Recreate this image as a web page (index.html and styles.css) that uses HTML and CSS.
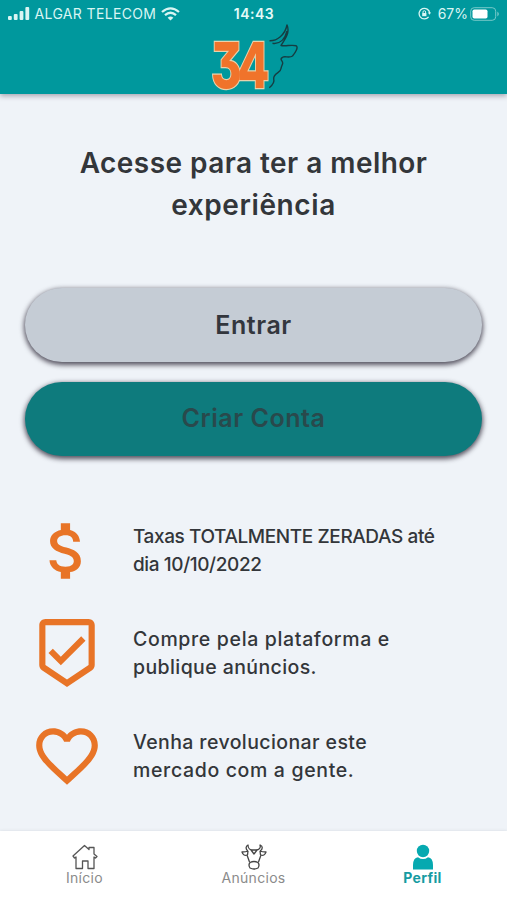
FILE: index.html
```
<!DOCTYPE html>
<html lang="pt-BR">
<head>
  <meta charset="UTF-8">
  <meta name="viewport" content="width=device-width, initial-scale=1.0">
  <title>Perfil</title>
  <link rel="stylesheet" href="styles.css">
</head>
<body>
  <header class="header">
    <div class="status">
      <div class="carrier">
        <svg width="22" height="14" viewBox="0 0 22 14" fill="#d9f5f3"><rect x="0" y="9" width="3.8" height="4" rx="1"/><rect x="5.8" y="7" width="3.8" height="6" rx="1"/><rect x="11.6" y="4" width="3.8" height="9" rx="1"/><rect x="17.4" y="0" width="3.8" height="13" rx="1"/></svg>
        <span class="carrier-name">ALGAR TELECOM</span>
        <svg width="19" height="14" viewBox="0 0 19 14" fill="none" stroke="#d9f5f3" stroke-width="2.3"><path d="M1 5Q9.5-2.3 18 5M4 8.2Q9.500 3.400 15 8.200"/><path d="M6.600 10.700Q9.500 8.300 12.400 10.700L9.500 13.600Z" fill="#d9f5f3" stroke="none"/></svg>
      </div>
      <div class="clock">14:43</div>
      <div class="battery">
        <svg width="13" height="13" viewBox="0 0 13 13" fill="none" stroke="#d9f5f3"><path d="M10.600 9.900A5.300 5.300 0 1 1 11.700 6" stroke-width="1.300"/><path d="M9.800 5.500h3.200l-1.500 2.300z" fill="#d9f5f3" stroke="none"/><rect x="4.200" y="6" width="4.200" height="3.200" fill="#d9f5f3" stroke="none"/><path d="M5 6V5a1.300 1.300 0 0 1 2.600 0v1"/></svg>
        <span class="percent">67%</span>
        <svg width="30" height="14" viewBox="0 0 30 14"><rect x=".7" y=".7" width="25" height="12.600" rx="3.500" fill="none" stroke="#76c9c9"/><rect x="2.500" y="2.500" width="15" height="9" rx="1.800" fill="#fff"/><path d="M27.300 4.500q3.200 2.500 0 5z" fill="#76c9c9"/></svg>
      </div>
    </div>
    <svg class="logo" width="90" height="84" viewBox="0 0 90 84">
      <text class="logo-number" x="0" y="65.500" textLength="54" lengthAdjust="spacingAndGlyphs">34</text>
      <path d="M58.500 18.700C66 19 74 13 76 3C79 10 75 16 70 23.500C75 24.500 80 22.500 85 23.700C88 25 84 31 81.500 34C78 36.500 74 33.500 71.500 35.300C68 37.500 72 38.500 71.700 41.500C71 43.500 70.500 44 70 46.500C70 51 62 51 62.700 57C64 61 61 63.500 58.300 65.700M61.500 21.300C69 22.500 74 17 76 9" fill="none" stroke="#153d42" stroke-width="1.400" stroke-linejoin="round"/>
    </svg>
  </header>

  <main class="content">
    <h1 class="title"><span class="title-top">Acesse para ter a melhor</span><br>experiência</h1>

    <div class="buttons">
      <button class="button login">Entrar</button>
      <button class="button signup">Criar Conta</button>
    </div>

    <div class="benefits">
      <div class="benefit">
        <svg class="icon" viewBox="0 0 24 24"><path d="M11.800 10.900c-2.270-.590-3-1.200-3-2.150 0-1.090 1.010-1.850 2.700-1.850 1.780 0 2.440.850 2.500 2.100h2.210c-.070-1.720-1.120-3.300-3.210-3.810V3h-3v2.160c-1.940.420-3.500 1.680-3.500 3.610 0 2.310 1.910 3.460 4.700 4.130 2.500.600 3 1.480 3 2.410 0 .690-.490 1.790-2.700 1.790-2.060 0-2.870-.920-2.980-2.100h-2.200c.120 2.190 1.760 3.420 3.680 3.830V21h3v-2.150c1.950-.370 3.500-1.500 3.500-3.550 0-2.840-2.430-3.810-4.700-4.400z"/></svg>
        <p class="fees">Taxas TOTALMENTE ZERADAS até<br>dia 10/10/2022</p>
      </div>
      <div class="benefit">
        <svg class="icon" viewBox="0 0 24 24"><path d="M19 1H5c-1.100 0-1.990.900-1.990 2L3 15.930c0 .690.350 1.300.880 1.660L12 23l8.110-5.410c.530-.360.880-.970.880-1.660L21 3c0-1.100-.900-2-2-2zm0 14.930l-7 4.660-7-4.660V3h14v12.930z"/><path d="M10 13.200l6.600-6.600L18 8l-8 8-4-4 1.400-1.400z"/></svg>
        <p><span class="wide">Compre pela plataforma e</span><br>publique anúncios.</p>
      </div>
      <div class="benefit">
        <svg class="icon" viewBox="0 0 24 24"><path d="M16.500 3c-1.740 0-3.410.810-4.500 2.090C10.910 3.810 9.240 3 7.500 3 4.420 3 2 5.420 2 8.500c0 3.780 3.400 6.860 8.550 11.540L12 21.350l1.450-1.320C18.600 15.360 22 12.280 22 8.500 22 5.420 19.580 3 16.500 3zm-4.400 15.550l-.1.100-.1-.1C7.140 14.240 4 11.390 4 8.500 4 6.500 5.500 5 7.500 5c1.540 0 3.040.990 3.570 2.360h1.870C13.460 5.990 14.960 5 16.500 5c2 0 3.500 1.500 3.500 3.500 0 2.890-3.140 5.740-7.900 10.050z"/></svg>
        <p>Venha revolucionar este<br><span class="wide">mercado com a gente.</span></p>
      </div>
    </div>
  </main>

  <nav class="tabs">
    <a class="tab">
      <svg width="26" height="26" viewBox="0 0 26 26" fill="none" stroke="#555" stroke-width="1.300" stroke-linejoin="round"><path d="M1 12L12.500 1.500L17 5.500V3.500H22V10L25 12.500L23.500 14L22 13V24.500H16V17H10.500V24.500H4V13L2.500 14Z"/></svg>
      <span>Início</span>
    </a>
    <a class="tab">
      <svg width="26" height="26" viewBox="0 0 26 26" fill="none" stroke="#444" stroke-width="1.300" stroke-linejoin="round"><path d="M7 7C4 5 5 2 7 1C7 4 9 6 11 6H15C18 6 20 4 19 1C22 2 22 5 19 7M7 7C5 8 3 8 1 8C2 11 4 12 6 11L8.500 18M19 7C21 8 23 8 25 8C24 11 22 12 20 11L17.500 18M7 7L6.500 11M19 7L19.500 11M10 6L13 10L16 6"/><path d="M9 18.500Q13 16.500 17 18.500Q19 21 17 24Q13 26 9 24Q7 21 9 18.500Z"/></svg>
      <span>Anúncios</span>
    </a>
    <a class="tab active">
      <svg width="26" height="26" viewBox="0 0 26 26" fill="#06a9b0"><circle cx="13" cy="7" r="6.200"/><path d="M3 25.500V21Q3 14 8 13.200Q13 17 18 13.200Q23 14 23 21V25.500Z"/></svg>
      <span>Perfil</span>
    </a>
  </nav>
</body>
</html>
```
FILE: styles.css
```
* { box-sizing: border-box; }
body { margin: 0; height: 900px; display: flex; flex-direction: column; overflow: hidden; font-family: Inter, "Liberation Sans", sans-serif; background: #eff3f8; color: #33363a; }

.header { height: 94px; flex: none; display: flex; flex-direction: column; background: #00989d; box-shadow: 0 2px 5px rgba(60, 50, 70, 0.4); }
.status { height: 22px; flex: none; display: grid; grid-template-columns: 1fr 60px 1fr; align-items: center; padding: 5px 7px 0 8px; color: #d9f5f3; font-size: 14px; line-height: 17px; white-space: nowrap; }
.carrier { display: flex; align-items: center; gap: 4.5px; }
.carrier-name { letter-spacing: 0.35px; }
.clock { text-align: center; font-weight: 600; letter-spacing: 0.5px; color: #e4faf8; }
.battery { display: flex; align-items: center; justify-content: flex-end; gap: 2px; }
.percent { margin-left: 5px; }
.logo { display: block; flex: none; margin-left: 211px; }
.logo-number { font-family: Inter, sans-serif; font-size: 63px; font-weight: 800; letter-spacing: -6px; font-feature-settings: "cv09"; fill: #f0732b; stroke: #e8d2ac; stroke-width: 2.5px; paint-order: stroke; }

.content { flex: 1; min-height: 0; }
.title { margin: 49px 0 0; text-align: center; font-size: 28px; line-height: 41.5px; font-weight: 600; letter-spacing: 0.6px; }
.title-top { letter-spacing: 0.45px; }

.buttons { display: flex; flex-direction: column; gap: 20px; padding: 62px 25px 0; }
.button { height: 74px; padding: 0; border: none; border-radius: 37px; font-family: inherit; font-size: 25px; font-weight: 600; letter-spacing: 0.55px; color: #33363d; box-shadow: 0 2px 5px 1px rgba(35, 30, 45, 0.75); }
.login { background: #c5ccd5; }
.signup { padding-bottom: 2px; background: #0e7b7d; color: #29494c; }

.benefits { display: flex; flex-direction: column; gap: 28.5px; padding: 57.5px 0 0 29.5px; }
.benefit { display: flex; align-items: center; gap: 29.5px; height: 74px; }
.icon { width: 74px; height: 74px; flex: none; fill: #e87427; }
.benefit p { margin: 0; font-size: 19.5px; line-height: 28px; font-weight: 500; letter-spacing: 0.4px; white-space: nowrap; }
.benefit .fees { font-size: 19px; letter-spacing: -0.4px; }
.wide { letter-spacing: 0.65px; }

.tabs { height: 69px; flex: none; display: grid; grid-template-columns: repeat(3, 1fr); background: #fff; box-shadow: 0 0 3px rgba(80, 90, 100, 0.15); }
.tab { display: flex; flex-direction: column; align-items: center; padding-top: 13px; font-size: 14px; line-height: 15px; letter-spacing: 0.3px; color: #8b8b8b; }
.active { color: #169ba2; font-weight: 700; }
```
